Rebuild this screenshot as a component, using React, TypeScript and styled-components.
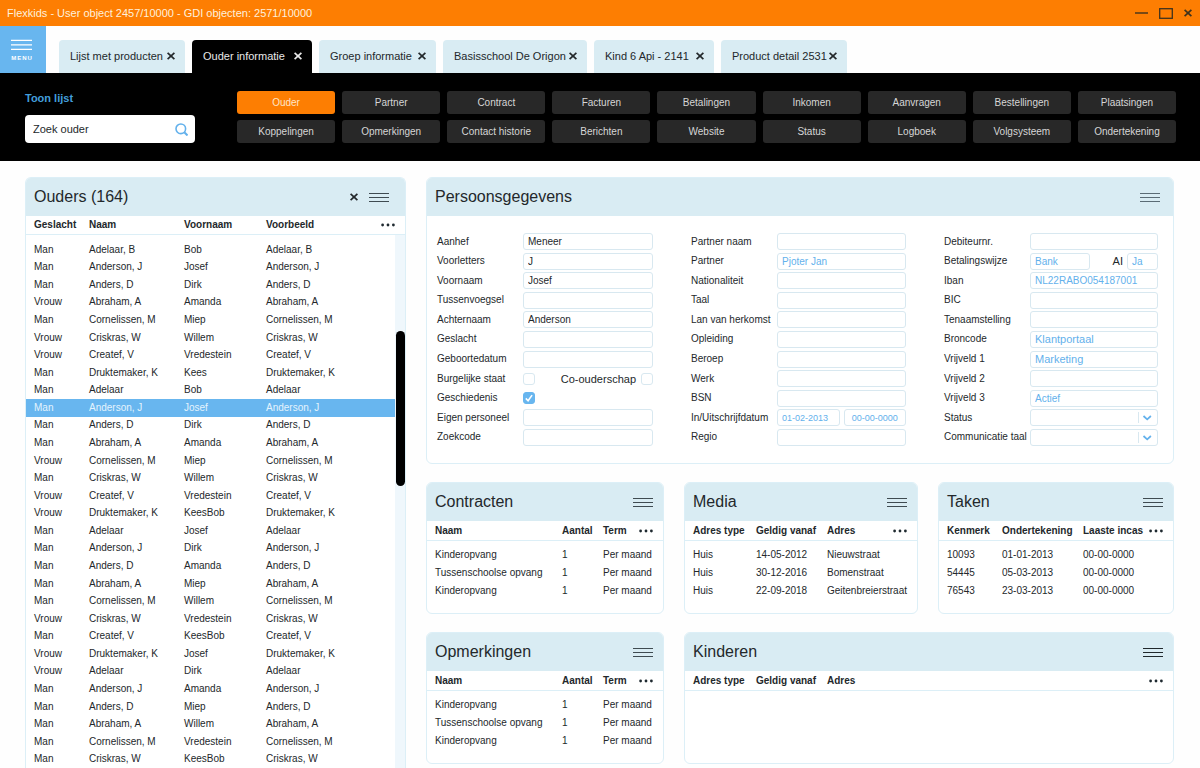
import React, { ReactNode, useId, useState } from "react";
import styled, { createGlobalStyle, css } from "styled-components";

const color = {
  orange: "#fd7e02",
  sky: "#68b6ef",
  link: "#63b1ec",
  pale: "#d9ecf3",
  line: "#dceff7",
  ink: "#23282b",
  black: "#000000",
  action: "#282828",
};

const GlobalStyle = createGlobalStyle`
  *, *::before, *::after { box-sizing: border-box; }
  html, body { margin: 0; padding: 0; background: #fefefe; }
  body, button, input, select {
    font-family: "Liberation Sans", Arial, Helvetica, sans-serif;
    font-size: 10px;
    color: ${color.ink};
  }
  button { border: 0; padding: 0; background: none; cursor: pointer; }
  h1, h2 { margin: 0; font-weight: 400; }
  svg { display: block; flex: none; }
`;

const Page = styled.div`
  min-height: 100vh;
  display: flex;
  flex-direction: column;
`;

/* ---------- window title and tabs ---------- */

const TitleBar = styled.header`
  height: 26px;
  padding: 0 8px 0 7px;
  display: flex;
  align-items: center;
  justify-content: space-between;
  background: ${color.orange};
`;

const WindowTitle = styled.h1`
  font-size: 11px;
  line-height: 16px;
  color: #fff0dc;
`;

const WindowControls = styled.div`
  display: flex;
  align-items: center;
  gap: 11px;
  color: #40331d;
`;

const IconButton = styled.button`
  display: flex;
  align-items: center;
  color: inherit;
`;

const TabBar = styled.nav`
  display: flex;
  align-items: flex-end;
  height: 47px;
`;

const MenuButton = styled.button`
  align-self: stretch;
  width: 46px;
  padding: 2px 3px 0 0;
  display: flex;
  flex-direction: column;
  align-items: center;
  justify-content: center;
  gap: 3px;
  color: #ffffff;
  background: ${color.sky};
`;

const MenuText = styled.span`
  padding-left: 1px;
  font-size: 6px;
  line-height: 8px;
  font-weight: 700;
  letter-spacing: 1px;
`;

const TabList = styled.div`
  flex: 1;
  display: flex;
  gap: 7px;
  padding-left: 13px;
`;

const Tab = styled.div<{ $basis: number; $active?: boolean }>`
  flex: 0 1 ${(p) => p.$basis}px;
  height: 33px;
  padding: 0 10px 2px 11px;
  display: flex;
  align-items: center;
  justify-content: space-between;
  border-radius: 4px 4px 0 0;
  white-space: nowrap;
  color: ${(p) => (p.$active ? "#e8e8e8" : color.ink)};
  background: ${(p) => (p.$active ? color.black : color.pale)};
`;

const TabLabel = styled.button`
  font-size: 11px;
  line-height: 16px;
  color: inherit;
`;

/* ---------- search and actions ---------- */

const Toolbar = styled.section`
  display: flex;
  gap: 42px;
  padding: 18px 24px 18px 25px;
  background: ${color.black};
`;

const SearchBlock = styled.div`
  flex: 0 0 168px;
  display: flex;
  flex-direction: column;
  justify-content: space-between;
`;

const SearchTitle = styled.label`
  font-size: 11px;
  line-height: 14px;
  font-weight: 700;
  color: #429edb;
`;

const SearchField = styled.div`
  display: flex;
  align-items: center;
  height: 28px;
  padding: 0 7px 0 8px;
  border-radius: 4px;
  background: #ffffff;
  color: ${color.link};
`;

const SearchInput = styled.input`
  flex: 1;
  min-width: 0;
  padding: 0;
  border: 0;
  outline: 0;
  background: none;
  font-size: 11px;
  &::placeholder { color: ${color.ink}; opacity: 1; }
`;

const ActionGrid = styled.div`
  flex: 1;
  display: grid;
  grid-template-columns: repeat(9, minmax(0, 1fr));
  gap: 6px 7px;
`;

const ActionButton = styled.button<{ $active?: boolean }>`
  height: 23px;
  border-radius: 3px;
  color: ${(p) => (p.$active ? "#ffe6c9" : "#d6d6d6")};
  background: ${(p) => (p.$active ? color.orange : color.action)};
`;

/* ---------- panels ---------- */

const Main = styled.main`
  flex: 1;
  display: grid;
  grid-template-columns: minmax(0, 381fr) minmax(0, 748fr);
  column-gap: 20px;
  padding: 16px 26px 0 25px;
`;

const Details = styled.div`
  display: grid;
  grid-template-columns: minmax(0, 238fr) minmax(0, 234fr) minmax(0, 236fr);
  align-content: start;
  gap: 18px 20px;
  padding-bottom: 4px;
`;

const PanelFrame = styled.section<{ $span?: number; $open?: boolean }>`
  grid-column: span ${(p) => p.$span ?? 1};
  display: flex;
  flex-direction: column;
  border: 1px solid ${color.line};
  border-radius: 6px;
  overflow: hidden;
  background: #ffffff;
  ${(p) =>
    p.$open &&
    css`
      border-bottom: 0;
      border-radius: 6px 6px 0 0;
    `}
`;

const PanelHeader = styled.header<{ $inset: number }>`
  height: 38px;
  padding: 0 ${(p) => p.$inset}px 0 8px;
  display: flex;
  align-items: center;
  justify-content: space-between;
  background: ${color.pale};
`;

const PanelTitle = styled.h2`
  font-size: 16px;
  line-height: 20px;
`;

const PanelTools = styled.div`
  display: flex;
  align-items: center;
  gap: 11px;
`;

/* ---------- tables ---------- */

const Table = styled.table<{ $columns: string }>`
  flex: 1;
  position: relative;
  display: flex;
  flex-direction: column;
  line-height: 12px;
  white-space: nowrap;
  tr {
    display: grid;
    grid-template-columns: ${(p) => p.$columns};
    align-items: center;
    padding: 0 10px 0 8px;
  }
  th, td { padding: 0; text-align: left; }
`;

const TableHead = styled.thead<{ $height: number }>`
  display: block;
  border-bottom: 1px solid ${color.line};
  tr { height: ${(p) => p.$height - 1}px; }
`;

const LastHeading = styled.div`
  display: flex;
  align-items: center;
  justify-content: space-between;
`;

const CardBody = styled.tbody`
  display: block;
  padding: 5px 0 13px;
  tr { height: 18px; }
`;

const EmptyBody = styled(CardBody)`
  min-height: 72px;
`;

const ListBody = styled.tbody`
  flex: 1;
  display: grid;
  grid-auto-rows: minmax(17px, 1fr);
  padding-top: 6px;
`;

const ListRow = styled.tr<{ $selected: boolean }>`
  ${(p) =>
    p.$selected &&
    css`
      color: #e4f3fd;
      background: ${color.sky};
    `}
`;

const ListArea = styled.div`
  flex: 1;
  display: flex;
  position: relative;
`;

/* The scroll track overlays the right edge of the list, below its headings. */
const ScrollTrack = styled.div`
  position: absolute;
  top: 19px;
  right: 0;
  bottom: 0;
  width: 10px;
  display: flex;
  flex-direction: column;
  align-items: center;
  background: #eff7fc;
  &::before { content: ""; flex: 0 0 18%; }
`;

const ScrollThumb = styled.div`
  flex: 0 0 29%;
  width: 9px;
  border-radius: 5px;
  background: ${color.black};
`;

/* ---------- form ---------- */

const Form = styled.form`
  display: grid;
  grid-template-columns: minmax(0, 216fr) minmax(0, 215fr) minmax(0, 214fr);
  column-gap: 38px;
  padding: 17px 15px 17px 10px;
`;

const FormColumn = styled.div`
  min-height: 213px;
  display: flex;
  flex-direction: column;
  justify-content: space-between;
`;

const FormRow = styled.div`
  display: grid;
  grid-template-columns: 86px minmax(0, 1fr);
  align-items: center;
  height: 17px;
`;

const FieldLabel = styled.label<{ $large?: boolean }>`
  font-size: ${(p) => (p.$large ? 11 : 10)}px;
  line-height: 14px;
  white-space: nowrap;
`;

const FieldGroup = styled.div<{ $gap?: number }>`
  display: flex;
  align-items: center;
  justify-content: space-between;
  gap: ${(p) => p.$gap ?? 4}px;
`;

const fieldFrame = css`
  width: 100%;
  min-width: 0;
  height: 17px;
  border: 1px solid #d8e8f0;
  border-radius: 3px;
  background: #ffffff;
  outline: 0;
`;

const TextInput = styled.input<{ $tone?: "link"; $size?: number; $width?: number; $centered?: boolean }>`
  ${fieldFrame}
  padding: 0 4px;
  font-size: ${(p) => p.$size ?? 10}px;
  color: ${(p) => (p.$tone ? color.link : color.ink)};
  text-align: ${(p) => (p.$centered ? "center" : "left")};
  ${(p) => p.$width && css`flex: 0 0 ${p.$width}px;`}
`;

const CheckBox = styled.input`
  appearance: none;
  width: 12px;
  height: 12px;
  margin: 0;
  border: 1px solid #d8e8f0;
  border-radius: 3px;
  background: #ffffff;
  &:checked { border-color: ${color.sky}; background: ${color.sky}; }
`;

const CheckFrame = styled.span`
  position: relative;
  width: 12px;
  height: 12px;
  svg {
    position: absolute;
    inset: 0;
    pointer-events: none;
  }
`;

const SelectFrame = styled.div`
  position: relative;
  color: ${color.link};
  svg {
    position: absolute;
    top: 0;
    right: 0;
    pointer-events: none;
  }
`;

const Select = styled.select`
  ${fieldFrame}
  display: block;
  appearance: none;
  padding: 0 20px 0 4px;
`;

/* ---------- icons ---------- */

const Cross = ({ size = 8 }: { size?: number }) => (
  <svg width={size} height={size} viewBox="0 0 8 8" stroke="currentColor" strokeWidth="1.7" fill="none">
    <path d="M.6 .8l6.800 6.400M7.400 .8L.6 7.200" />
  </svg>
);

const Bars = ({ tone = "#3f4b51" }: { tone?: string }) => (
  <svg width="20" height="9" viewBox="0 0 20 9" stroke={tone} strokeWidth="1.2">
    <path d="M0 .5h20M0 4.5h20M0 8.5h20" />
  </svg>
);

const Dots = () => (
  <svg width="14" height="4" viewBox="0 0 14 4" fill="#1f2a30">
    <circle cx="1.6" cy="2" r="1.4" />
    <circle cx="7" cy="2" r="1.4" />
    <circle cx="12.4" cy="2" r="1.4" />
  </svg>
);

const MenuIcon = () => (
  <svg width="21" height="12" viewBox="0 0 21 12" stroke="currentColor" strokeWidth="1.4">
    <path d="M0 1.4h21M0 5.9h21M0 10.4h21" />
  </svg>
);

const SearchIcon = () => (
  <svg width="13" height="13" viewBox="0 0 13 13" stroke="currentColor" strokeWidth="1.6" fill="none">
    <circle cx="5.8" cy="5.8" r="4.8" />
    <path d="M9.3 9.3l3.2 3.2" strokeWidth="2" />
  </svg>
);

const CheckIcon = () => (
  <svg width="12" height="12" viewBox="0 0 12 12" stroke="#ffffff" strokeWidth="1.6" fill="none">
    <path d="M2.8 6.4l2.3 2.3 4-5.6" />
  </svg>
);

const SelectArrow = () => (
  <svg width="20" height="17" viewBox="0 0 20 17" fill="none">
    <path d="M.5 3v11" stroke="#d8e8f0" />
    <path d="M5.5 7l3.7 3.4L12.900 7" stroke="currentColor" strokeWidth="1.7" />
  </svg>
);

/* ---------- data ---------- */

const tabs = [
  { label: "Lijst met producten", basis: 126 },
  { label: "Ouder informatie", basis: 120, active: true },
  { label: "Groep informatie", basis: 117 },
  { label: "Basisschool De Origon", basis: 144 },
  { label: "Kind 6 Api - 2141", basis: 120 },
  { label: "Product detail 2531", basis: 126 },
];

const actions = [
  "Ouder", "Partner", "Contract", "Facturen", "Betalingen", "Inkomen", "Aanvragen", "Bestellingen", "Plaatsingen",
  "Koppelingen", "Opmerkingen", "Contact historie", "Berichten", "Website", "Status", "Logboek", "Volgsysteem", "Ondertekening",
];

const parents: [string, string, string][] = [
  ["Man", "Adelaar, B", "Bob"],
  ["Man", "Anderson, J", "Josef"],
  ["Man", "Anders, D", "Dirk"],
  ["Vrouw", "Abraham, A", "Amanda"],
  ["Man", "Cornelissen, M", "Miep"],
  ["Vrouw", "Criskras, W", "Willem"],
  ["Vrouw", "Createf, V", "Vredestein"],
  ["Man", "Druktemaker, K", "Kees"],
  ["Man", "Adelaar", "Bob"],
  ["Man", "Anderson, J", "Josef"],
  ["Man", "Anders, D", "Dirk"],
  ["Man", "Abraham, A", "Amanda"],
  ["Vrouw", "Cornelissen, M", "Miep"],
  ["Man", "Criskras, W", "Willem"],
  ["Vrouw", "Createf, V", "Vredestein"],
  ["Vrouw", "Druktemaker, K", "KeesBob"],
  ["Man", "Adelaar", "Josef"],
  ["Man", "Anderson, J", "Dirk"],
  ["Man", "Anders, D", "Amanda"],
  ["Man", "Abraham, A", "Miep"],
  ["Man", "Cornelissen, M", "Willem"],
  ["Vrouw", "Criskras, W", "Vredestein"],
  ["Man", "Createf, V", "KeesBob"],
  ["Vrouw", "Druktemaker, K", "Josef"],
  ["Vrouw", "Adelaar", "Dirk"],
  ["Man", "Anderson, J", "Amanda"],
  ["Man", "Anders, D", "Miep"],
  ["Man", "Abraham, A", "Willem"],
  ["Man", "Cornelissen, M", "Vredestein"],
  ["Man", "Criskras, W", "KeesBob"],
];

const contractRows = [
  ["Kinderopvang", "1", "Per maand"],
  ["Tussenschoolse opvang", "1", "Per maand"],
  ["Kinderopvang", "1", "Per maand"],
];

const cards = [
  { title: "Contracten", columns: "127fr 41fr 50fr", heads: ["Naam", "Aantal", "Term"], rows: contractRows },
  {
    title: "Media",
    columns: "63fr 71fr 80fr",
    heads: ["Adres type", "Geldig vanaf", "Adres"],
    rows: [
      ["Huis", "14-05-2012", "Nieuwstraat"],
      ["Huis", "30-12-2016", "Bomenstraat"],
      ["Huis", "22-09-2018", "Geitenbreierstraat"],
    ],
  },
  {
    title: "Taken",
    columns: "55fr 81fr 80fr",
    heads: ["Kenmerk", "Ondertekening", "Laaste incas"],
    rows: [
      ["10093", "01-01-2013", "00-00-0000"],
      ["54445", "05-03-2013", "00-00-0000"],
      ["76543", "23-03-2013", "00-00-0000"],
    ],
  },
  { title: "Opmerkingen", columns: "127fr 41fr 50fr", heads: ["Naam", "Aantal", "Term"], rows: contractRows },
  {
    title: "Kinderen",
    columns: "63fr 71fr 336fr",
    heads: ["Adres type", "Geldig vanaf", "Adres"],
    rows: [],
    span: 2,
    tone: "#20282c",
  },
];

/* ---------- parts ---------- */

type PanelProps = {
  title: string;
  span?: number;
  open?: boolean;
  inset?: number;
  closable?: boolean;
  tone?: string;
  children: ReactNode;
};

const Panel = ({ title, span, open, inset = 10, closable, tone, children }: PanelProps) => (
  <PanelFrame $span={span} $open={open}>
    <PanelHeader $inset={inset}>
      <PanelTitle>{title}</PanelTitle>
      <PanelTools>
        {closable && (
          <IconButton type="button" aria-label={`${title} sluiten`}>
            <Cross />
          </IconButton>
        )}
        <IconButton type="button" aria-label={`${title} menu`}>
          <Bars tone={tone} />
        </IconButton>
      </PanelTools>
    </PanelHeader>
    {children}
  </PanelFrame>
);

const Heads = ({ heads, height = 20 }: { heads: string[]; height?: number }) => (
  <TableHead $height={height}>
    <tr>
      {heads.map((head, i) => (
        <th key={head} scope="col">
          {i < heads.length - 1 ? (
            head
          ) : (
            <LastHeading>
              {head}
              <IconButton type="button" aria-label="Kolommen">
                <Dots />
              </IconButton>
            </LastHeading>
          )}
        </th>
      ))}
    </tr>
  </TableHead>
);

type FieldProps = { label: string; value?: string; link?: boolean; size?: number };

const Field = ({ label, value = "", link, size }: FieldProps) => {
  const id = useId();
  return (
    <FormRow>
      <FieldLabel htmlFor={id}>{label}</FieldLabel>
      <TextInput id={id} defaultValue={value} $tone={link ? "link" : undefined} $size={size} />
    </FormRow>
  );
};

const Check = ({ id, defaultChecked = false }: { id: string; defaultChecked?: boolean }) => {
  const [checked, setChecked] = useState(defaultChecked);
  return (
    <CheckFrame>
      <CheckBox id={id} type="checkbox" checked={checked} onChange={(e) => setChecked(e.target.checked)} />
      {checked && <CheckIcon />}
    </CheckFrame>
  );
};

const SelectField = ({ label }: { label: string }) => {
  const id = useId();
  return (
    <FormRow>
      <FieldLabel htmlFor={id}>{label}</FieldLabel>
      <SelectFrame>
        <Select id={id} />
        <SelectArrow />
      </SelectFrame>
    </FormRow>
  );
};

const PersonForm = () => (
  <Form>
    <FormColumn>
      <Field label="Aanhef" value="Meneer" />
      <Field label="Voorletters" value="J" />
      <Field label="Voornaam" value="Josef" />
      <Field label="Tussenvoegsel" />
      <Field label="Achternaam" value="Anderson" />
      <Field label="Geslacht" />
      <Field label="Geboortedatum" />
      <FormRow>
        <FieldLabel htmlFor="burgerlijk">Burgelijke staat</FieldLabel>
        <FieldGroup>
          <Check id="burgerlijk" />
          <FieldGroup $gap={5}>
            <FieldLabel htmlFor="co-ouder" $large>Co-ouderschap</FieldLabel>
            <Check id="co-ouder" />
          </FieldGroup>
        </FieldGroup>
      </FormRow>
      <FormRow>
        <FieldLabel htmlFor="geschiedenis">Geschiedenis</FieldLabel>
        <FieldGroup>
          <Check id="geschiedenis" defaultChecked />
        </FieldGroup>
      </FormRow>
      <Field label="Eigen personeel" />
      <Field label="Zoekcode" />
    </FormColumn>
    <FormColumn>
      <Field label="Partner naam" />
      <Field label="Partner" value="Pjoter Jan" link />
      <Field label="Nationaliteit" />
      <Field label="Taal" />
      <Field label="Lan van herkomst" />
      <Field label="Opleiding" />
      <Field label="Beroep" />
      <Field label="Werk" />
      <Field label="BSN" />
      <FormRow>
        <FieldLabel htmlFor="datum-in">In/Uitschrijfdatum</FieldLabel>
        <FieldGroup>
          <TextInput id="datum-in" defaultValue="01-02-2013" $tone="link" $size={9} />
          <TextInput aria-label="Uitschrijfdatum" defaultValue="00-00-0000" $tone="link" $size={9} $centered />
        </FieldGroup>
      </FormRow>
      <Field label="Regio" />
    </FormColumn>
    <FormColumn>
      <Field label="Debiteurnr." />
      <FormRow>
        <FieldLabel htmlFor="betaling">Betalingswijze</FieldLabel>
        <FieldGroup>
          <TextInput id="betaling" defaultValue="Bank" $tone="link" $width={60} />
          <FieldGroup>
            <FieldLabel htmlFor="ai" $large>AI</FieldLabel>
            <TextInput id="ai" defaultValue="Ja" $tone="link" $width={31} />
          </FieldGroup>
        </FieldGroup>
      </FormRow>
      <Field label="Iban" value="NL22RABO054187001" link />
      <Field label="BIC" />
      <Field label="Tenaamstelling" />
      <Field label="Broncode" value="Klantportaal" link size={11} />
      <Field label="Vrijveld 1" value="Marketing" link size={11} />
      <Field label="Vrijveld 2" />
      <Field label="Vrijveld 3" value="Actief" link />
      <SelectField label="Status" />
      <SelectField label="Communicatie taal" />
    </FormColumn>
  </Form>
);

export default function App() {
  const [selected, setSelected] = useState(9);

  return (
    <Page>
      <GlobalStyle />
      <TitleBar>
        <WindowTitle>Flexkids - User object 2457/10000 - GDI objecten: 2571/10000</WindowTitle>
        <WindowControls>
          <IconButton type="button" aria-label="Minimaliseren">
            <svg width="13" height="10" viewBox="0 0 13 10" stroke="currentColor" strokeWidth="1.4">
              <path d="M0 5h13" />
            </svg>
          </IconButton>
          <IconButton type="button" aria-label="Maximaliseren">
            <svg width="14" height="11" viewBox="0 0 14 11" stroke="currentColor" strokeWidth="1.3" fill="none">
              <rect x=".7" y=".7" width="12.600" height="9.600" />
            </svg>
          </IconButton>
          <IconButton type="button" aria-label="Sluiten">
            <Cross />
          </IconButton>
        </WindowControls>
      </TitleBar>

      <TabBar>
        <MenuButton type="button">
          <MenuIcon />
          <MenuText>MENU</MenuText>
        </MenuButton>
        <TabList>
          {tabs.map((tab) => (
            <Tab key={tab.label} $basis={tab.basis} $active={tab.active}>
              <TabLabel type="button">{tab.label}</TabLabel>
              <IconButton type="button" aria-label={`${tab.label} sluiten`}>
                <Cross />
              </IconButton>
            </Tab>
          ))}
        </TabList>
      </TabBar>

      <Toolbar>
        <SearchBlock>
          <SearchTitle htmlFor="zoek">Toon lijst</SearchTitle>
          <SearchField>
            <SearchInput id="zoek" placeholder="Zoek ouder" />
            <IconButton type="button" aria-label="Zoeken">
              <SearchIcon />
            </IconButton>
          </SearchField>
        </SearchBlock>
        <ActionGrid>
          {actions.map((action, i) => (
            <ActionButton key={action} type="button" $active={i === 0}>
              {action}
            </ActionButton>
          ))}
        </ActionGrid>
      </Toolbar>

      <Main>
        <Panel title="Ouders (164)" open inset={16} closable>
          <ListArea>
            <Table $columns="55fr 95fr 82fr 129fr">
              <Heads heads={["Geslacht", "Naam", "Voornaam", "Voorbeeld"]} height={19} />
              <ListBody>
                {parents.map(([gender, name, first], i) => (
                  <ListRow key={i} $selected={i === selected} onClick={() => setSelected(i)}>
                    <td>{gender}</td>
                    <td>{name}</td>
                    <td>{first}</td>
                    <td>{name}</td>
                  </ListRow>
                ))}
              </ListBody>
            </Table>
            <ScrollTrack>
              <ScrollThumb />
            </ScrollTrack>
          </ListArea>
        </Panel>

        <Details>
          <Panel title="Persoonsgegevens" span={3} inset={13} tone="#5b6c75">
            <PersonForm />
          </Panel>
          {cards.map((card) => (
            <Panel key={card.title} title={card.title} span={card.span} tone={card.tone}>
              <Table $columns={card.columns}>
                <Heads heads={card.heads} />
                {card.rows.length === 0 ? (
                  <EmptyBody />
                ) : (
                  <CardBody>
                    {card.rows.map((row, i) => (
                      <tr key={i}>
                        {row.map((cell, j) => (
                          <td key={j}>{cell}</td>
                        ))}
                      </tr>
                    ))}
                  </CardBody>
                )}
              </Table>
            </Panel>
          ))}
        </Details>
      </Main>
    </Page>
  );
}
